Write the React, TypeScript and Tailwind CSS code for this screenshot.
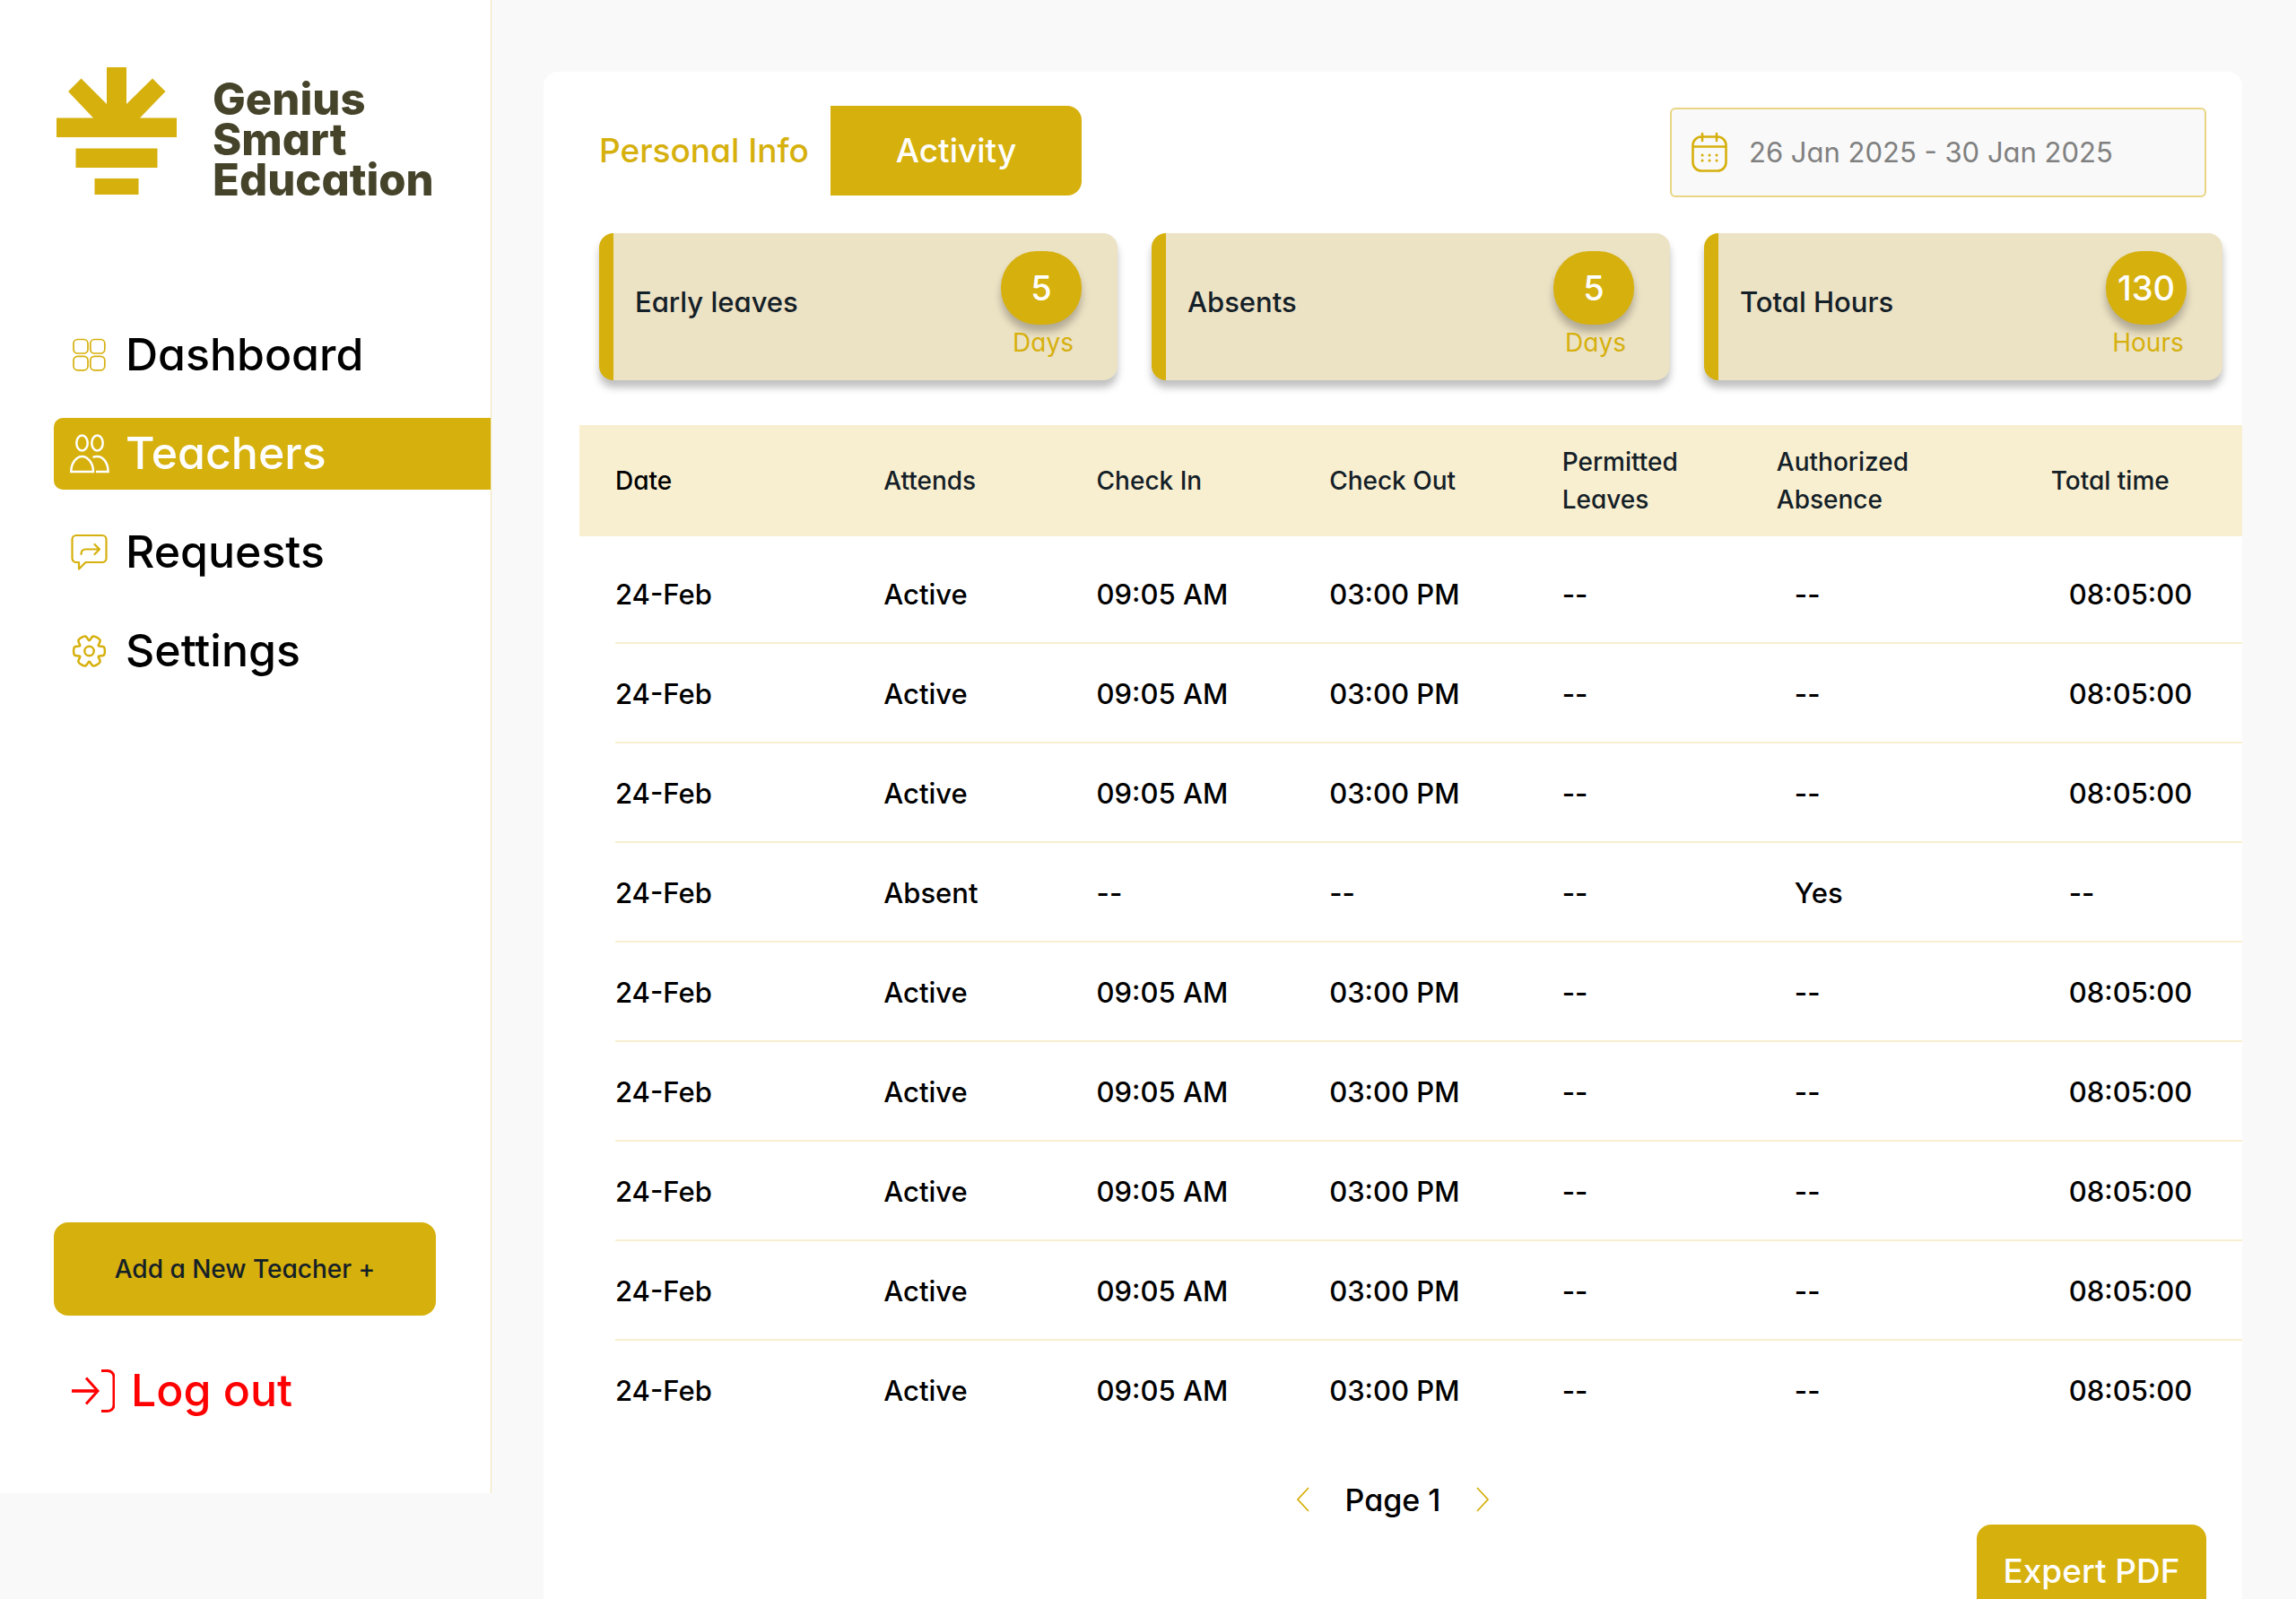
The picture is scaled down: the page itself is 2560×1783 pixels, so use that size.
import React from "react";
import type { ReactNode } from "react";

const GOLD = "#d6b00d";

function Logo() {
  return (
    <div className="flex items-start gap-10">
      <svg width="134" height="142" viewBox="0 0 134 142" fill={GOLD} aria-hidden="true">
        <path d="M56 0h22v41l29-28.500 14.500 14.500L93 56.500h41V78H0V56.500h41L13 27l14.500-14.500L56 41Z" />
        <path d="M21.500 90.500h91v21.500h-91ZM42.500 124h49v18h-49Z" />
      </svg>
      <p className="pt-[13px] text-[49px] font-extrabold leading-[45px] text-[#45432a]">
        Genius
        <br />
        Smart
        <br />
        Education
      </p>
    </div>
  );
}

function GridIcon() {
  return (
    <svg width="44" height="44" viewBox="0 0 44 44" fill="none" stroke={GOLD} strokeWidth="1.700" aria-hidden="true">
      <rect x="4" y="4.500" width="16" height="15.500" rx="4.500" />
      <rect x="22.800" y="4.500" width="16" height="15.500" rx="4.500" />
      <rect x="4" y="23.300" width="16" height="15.500" rx="4.500" />
      <rect x="22.800" y="23.300" width="16" height="15.500" rx="4.500" />
    </svg>
  );
}

function PeopleIcon() {
  return (
    <svg width="44" height="44" viewBox="0 0 44 44" fill="none" stroke="#fff" strokeWidth="2.500" aria-hidden="true">
      <ellipse cx="13.500" cy="10" rx="6.200" ry="8.500" />
      <ellipse cx="30.500" cy="10" rx="6.200" ry="8.500" />
      <path d="M1.300 42c0-10 6-17 12.200-17S26 32 26 42Z" />
      <path d="M25.500 26c1.500-.8 3-1 5-1C37 25 42.500 32 42.500 42H29" />
    </svg>
  );
}

function RequestIcon() {
  return (
    <svg width="44" height="44" viewBox="0 0 44 44" fill="none" stroke={GOLD} strokeWidth="2.200" strokeLinecap="round" strokeLinejoin="round" aria-hidden="true">
      <path d="M7 3h29a4.500 4.500 0 0 1 4.500 4.500v21a4.500 4.500 0 0 1-4.500 4.500H17.500L10 40.500v-7.500H7A4.500 4.500 0 0 1 2.500 28.500v-21A4.500 4.500 0 0 1 7 3Z" />
      <path d="M12.500 24c0-4 2-5.500 5-5.500H33M27.500 13 33 18.500 27.500 24" />
    </svg>
  );
}

/** Control points of one gear tooth: angle in degrees, distance from the centre. */
const TOOTH: [number, number][] = [
  [-30, 11],
  [-22, 14.5],
  [-15, 18],
  [15, 18],
  [22, 14.5],
];

function gearPath(cx: number, cy: number) {
  const points = [0, 60, 120, 180, 240, 300].flatMap((turn) =>
    TOOTH.map(([angle, radius]) => {
      const a = ((angle + turn) * Math.PI) / 180;
      return [cx + radius * Math.cos(a), cy + radius * Math.sin(a)];
    }),
  );
  const middle = (i: number) => {
    const p = points[i % points.length];
    const q = points[(i + 1) % points.length];
    return `${(p[0] + q[0]) / 2} ${(p[1] + q[1]) / 2}`;
  };
  return (
    `M${middle(points.length - 1)}` +
    points.map((p, i) => `Q${p[0]} ${p[1]} ${middle(i)}`).join("") +
    "Z"
  );
}

function GearIcon() {
  return (
    <svg width="44" height="44" viewBox="0 0 44 44" fill="none" stroke={GOLD} strokeWidth="2.500" aria-hidden="true">
      <path d={gearPath(21.5, 22)} />
      <circle cx="21.500" cy="22" r="5.200" />
    </svg>
  );
}

function LogoutIcon() {
  return (
    <svg width="48" height="50" viewBox="0 0 48 50" fill="none" stroke="#ff0000" strokeWidth="3" aria-hidden="true">
      <path d="M0 25h29" strokeWidth="3.600" />
      <path d="M16 10.500 29 25 16 39.500" />
      <path d="M33 2.500h7a7 7 0 0 1 7 7v31a7 7 0 0 1-7 7h-7" />
    </svg>
  );
}

function CalendarIcon() {
  return (
    <svg width="40" height="46" viewBox="0 0 40 46" fill="none" stroke={GOLD} strokeWidth="2.600" strokeLinecap="round" aria-hidden="true">
      <rect x="1.500" y="5.500" width="37" height="38" rx="9.500" />
      <path d="M2 16.500h36M12 2v8M28 2v8" />
      <path d="M12 26h.1M20 26h.1M28 26h.1M12 32h.1M20 32h.1M28 32h.1" strokeWidth="3" />
    </svg>
  );
}

function NavItem({ icon, label, active }: { icon: ReactNode; label: string; active?: boolean }) {
  return (
    <a
      href="#"
      aria-current={active ? "page" : undefined}
      className={
        active
          ? "flex h-20 items-center gap-[18px] rounded-l-[10px] bg-[#d6b00d] pl-[18px] text-white"
          : "flex h-20 items-center gap-[18px] rounded-l-[10px] pl-[18px] text-black"
      }
    >
      {icon}
      <span className="pb-0.5">{label}</span>
    </a>
  );
}

function StatCard({ label, value, unit }: { label: string; value: number; unit: string }) {
  return (
    <div className="flex h-[164px] items-start justify-between rounded-2xl border-l-[16px] border-[#d6b00d] bg-[#ece2c4] pl-6 pr-10 pt-5 shadow-[0_8px_8px_rgba(0,0,0,0.25)]">
      <span className="pt-[37px] text-[31px] leading-10 text-[#142027]">{label}</span>
      <div className="flex w-[90px] flex-col items-center">
        <span className="flex h-[82px] w-[90px] items-center justify-center rounded-[40px] bg-[#d6b00d] text-[38px] text-white shadow-[0_8px_8px_rgba(0,0,0,0.25)]">
          {value}
        </span>
        <span className="pl-1 text-[28px] font-normal leading-10 text-[#d6b00d]">{unit}</span>
      </div>
    </div>
  );
}

const present = ["24-Feb", "Active", "09:05 AM", "03:00 PM", "--", "--", "08:05:00"];
const absent = ["24-Feb", "Absent", "--", "--", "--", "Yes", "--"];
const rows = [present, present, present, absent, present, present, present, present, present];

const headings = ["Date", "Attends", "Check In", "Check Out", "Permitted Leaves", "Authorized Absence", "Total time"];

function ActivityTable() {
  return (
    <table className="w-full table-fixed text-left">
      <colgroup>
        <col className="w-[18.3%]" />
        <col className="w-[12.8%]" />
        <col className="w-[14%]" />
        <col className="w-[14%]" />
        <col className="w-[12.9%]" />
        <col className="w-[16.5%]" />
        <col />
      </colgroup>
      <thead className="bg-[#f8efd0]">
        <tr className="h-[124px]">
          {headings.map((heading, i) => (
            <th
              key={heading}
              scope="col"
              className={
                i === 0
                  ? "pl-10 text-[28px] font-medium leading-[42px] text-black"
                  : i === 5
                    ? "pr-28 text-[28px] font-medium leading-[42px] text-[#142027]"
                    : "pr-10 text-[28px] font-medium leading-[42px] text-[#142027]"
              }
            >
              {heading}
            </th>
          ))}
        </tr>
      </thead>
      <tbody className="text-[31px] before:block before:h-[9px]">
        {rows.map((cells, r) => (
          <tr key={r}>
            {cells.map((cell, c) => (
              <td key={c} className={c === 0 ? "p-0 pl-10" : "p-0"}>
                <div
                  className={
                    (r < rows.length - 1 ? "border-[#f8efd0] " : "border-transparent ") +
                    "flex h-[111px] items-center border-b-2 pt-1 " +
                    (c >= 5 ? "pl-5" : "")
                  }
                >
                  {cell}
                </div>
              </td>
            ))}
          </tr>
        ))}
      </tbody>
    </table>
  );
}

export default function App() {
  return (
    <div className="flex h-screen items-start overflow-hidden bg-[#f9f9f9] font-['Inter',sans-serif] font-medium text-black [font-feature-settings:'cv11']">
      <aside className="w-[548px] shrink-0 border-r border-[#efe4b4] bg-white pb-[78px] pl-[60px]">
        <div className="h-[217px] pl-[3px] pt-[75px]">
          <Logo />
        </div>
        <nav aria-label="Main" className="flex flex-col gap-[30px] pt-[139px] text-[50px]">
          <NavItem icon={<GridIcon />} label="Dashboard" />
          <NavItem icon={<PeopleIcon />} label="Teachers" active />
          <NavItem icon={<RequestIcon />} label="Requests" />
          <NavItem icon={<GearIcon />} label="Settings" />
        </nav>
        <div className="mr-[61px] pt-[597px]">
          <button type="button" className="h-[104px] w-full rounded-2xl bg-[#d6b00d] text-[28px] text-[#142027]">
            Add a New Teacher +
          </button>
          <button type="button" className="mt-12 flex h-[72px] items-center gap-[18px] pl-5 text-[50px] text-[#ff0000]">
            <LogoutIcon />
            <span className="pb-0.5">Log out</span>
          </button>
        </div>
      </aside>

      <main className="ml-[58px] mr-[60px] mt-20 min-w-0 flex-1 self-stretch rounded-t-2xl bg-white">
        <header className="flex items-start justify-between pl-[62px] pr-10 pt-[38px]">
          <div role="tablist" className="flex h-[100px] text-[37px]">
            <button type="button" role="tab" aria-selected="false" className="w-[258px] text-left text-[#d6b00d]">
              Personal Info
            </button>
            <button type="button" role="tab" aria-selected="true" className="w-[280px] rounded-r-2xl bg-[#d6b00d] text-white">
              Activity
            </button>
          </div>
          <label className="mt-0.5 flex h-[100px] w-[598px] items-center gap-6 rounded-md border-2 border-[#e9d583] bg-[#f9f9f9] pl-[22px]">
            <CalendarIcon />
            <input
              type="text"
              aria-label="Date range"
              defaultValue="26 Jan 2025 - 30 Jan 2025"
              className="min-w-0 flex-1 bg-transparent text-[31px] font-normal text-[#808080] outline-none"
            />
          </label>
        </header>

        <section aria-label="Summary" className="grid grid-cols-3 gap-[38px] pl-[62px] pr-[22px] pt-10">
          <StatCard label="Early leaves" value={5} unit="Days" />
          <StatCard label="Absents" value={5} unit="Days" />
          <StatCard label="Total Hours" value={130} unit="Hours" />
        </section>

        <section aria-label="Activity" className="pl-10 pt-[50px]">
          <ActivityTable />
        </section>

        <div className="mt-[38px] flex h-14 items-center justify-center gap-10 text-[34px]">
          <button type="button" aria-label="Previous page">
            <svg width="14" height="28" viewBox="0 0 14 28" fill="none" stroke={GOLD} strokeWidth="1.800" aria-hidden="true">
              <path d="M13 1 1 14l12 13" />
            </svg>
          </button>
          <span>Page 1</span>
          <button type="button" aria-label="Next page">
            <svg width="14" height="28" viewBox="0 0 14 28" fill="none" stroke={GOLD} strokeWidth="1.800" aria-hidden="true">
              <path d="m1 1 12 13L1 27" />
            </svg>
          </button>
        </div>

        <div className="flex justify-end pr-10">
          <button type="button" className="h-[104px] w-[256px] rounded-2xl bg-[#d6b00d] text-[37px] text-white">
            Expert PDF
          </button>
        </div>
      </main>
    </div>
  );
}
